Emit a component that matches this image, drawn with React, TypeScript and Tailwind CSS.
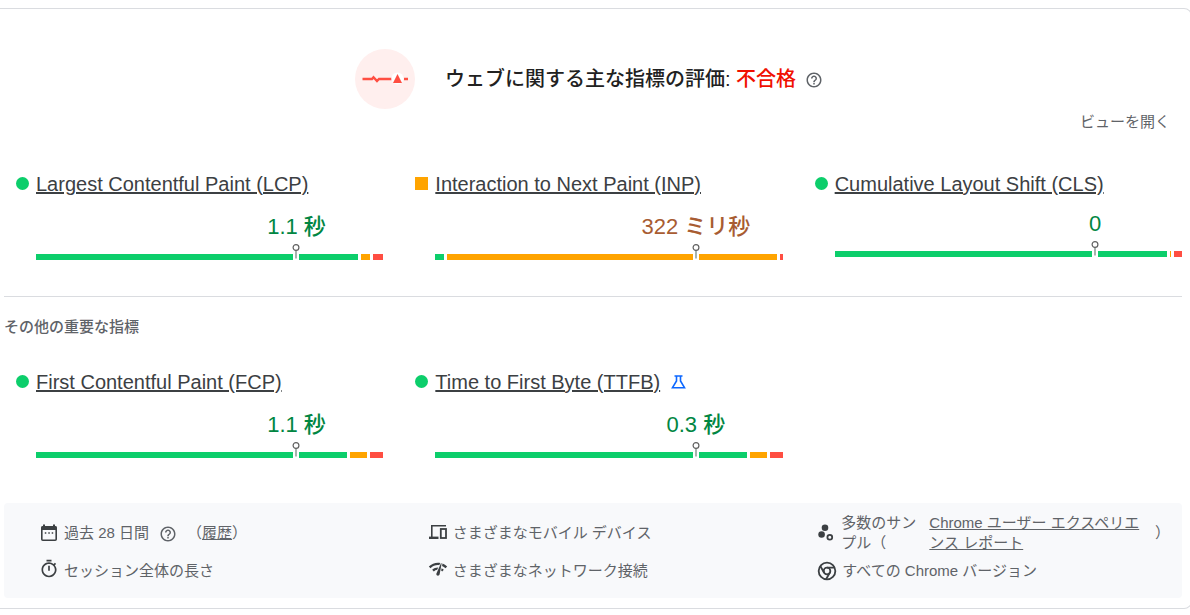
import { MdHelpOutline, MdNetworkCheck, MdOutlineTimer } from "react-icons/md";

type Rating = "good" | "average";

type Metric = {
  name: string;
  rating: Rating;
  value: string;
  // share of good / average / poor loads
  shares: [number, number, number];
  experimental?: boolean;
};

const CORE_METRICS: Metric[] = [
  { name: "Largest Contentful Paint (LCP)", rating: "good", value: "1.1 秒", shares: [322, 9, 10] },
  { name: "Interaction to Next Paint (INP)", rating: "average", value: "322 ミリ秒", shares: [9, 329, 3] },
  { name: "Cumulative Layout Shift (CLS)", rating: "good", value: "0", shares: [332, 1, 8] },
];

const OTHER_METRICS: Metric[] = [
  { name: "First Contentful Paint (FCP)", rating: "good", value: "1.1 秒", shares: [311, 17, 13] },
  {
    name: "Time to First Byte (TTFB)",
    rating: "good",
    value: "0.3 秒",
    shares: [311, 17, 13],
    experimental: true,
  },
];

const SHARE_COLORS = ["bg-[#0cce6b]", "bg-[#ffa400]", "bg-[#ff4e42]"];

function PulseIcon() {
  return (
    <svg width="60" height="60" viewBox="0 0 60 60" className="shrink-0" aria-hidden="true">
      <circle cx="30" cy="30" r="30" fill="#ffefee" />
      <path
        d="M7.5 30H17L18.5 28.3L22 32L24 30H36.5M49 30H53"
        fill="none"
        stroke="#ff4e42"
        strokeWidth="2.4"
      />
      <circle cx="42.5" cy="29.5" r="6" fill="#fff" />
      <path d="M42.5 25L47 34H38Z" fill="#ff4e42" />
    </svg>
  );
}

function FlaskIcon() {
  return (
    <svg
      width="15"
      height="14"
      viewBox="0 0 15 14"
      fill="none"
      stroke="#0c67ff"
      strokeWidth="1.6"
      className="ml-1"
      aria-hidden="true"
    >
      <path d="M3.5 1H11.5M5.5 1V6L1.5 12.7H13.5L9.5 6V1" />
    </svg>
  );
}

function CalendarIcon() {
  return (
    <svg width="18" height="18" viewBox="0 0 18 18" aria-hidden="true">
      <path d="M4 0.5V3M14 0.5V3" stroke="currentColor" strokeWidth="2" />
      <rect x="1.8" y="2.8" width="14.4" height="13.4" rx="1" fill="none" stroke="currentColor" strokeWidth="1.6" />
      <path d="M1.5 2.5H16.5V6H1.5Z" fill="currentColor" />
      <path d="M4.8 9H6.3M8.3 9H9.8M11.7 9H13.2" stroke="currentColor" strokeWidth="1.5" />
    </svg>
  );
}

function DevicesIcon() {
  return (
    <svg width="18" height="18" viewBox="0 0 18 18" fill="none" stroke="currentColor" strokeWidth="1.6" aria-hidden="true">
      <path d="M17 1.8H2.8V13" />
      <path d="M0 13.8H9.5" strokeWidth="2.4" />
      <rect x="11.8" y="5" width="5.2" height="9" strokeWidth="1.8" />
    </svg>
  );
}

function SamplesIcon() {
  return (
    <svg width="18" height="18" viewBox="0 0 18 18" fill="currentColor" aria-hidden="true">
      <circle cx="8" cy="3.8" r="3.3" />
      <circle cx="4.6" cy="10.5" r="3.3" />
      <circle cx="12.8" cy="13.2" r="2.4" fill="none" stroke="currentColor" strokeWidth="1.8" />
    </svg>
  );
}

function ChromeIcon() {
  return (
    <svg width="20" height="20" viewBox="0 0 24 24" fill="none" stroke="currentColor" strokeWidth="2.2" aria-hidden="true">
      <circle cx="12" cy="12" r="10" />
      <circle cx="12" cy="12" r="4" />
      <path d="M12 8H21.17M3.95 6.06L8.54 14M10.88 21.94L15.46 14" />
    </svg>
  );
}

function Pin() {
  return (
    <svg
      width="8"
      height="18"
      viewBox="0 0 8 18"
      className="absolute bottom-0 left-3/4 -translate-x-1/2"
      aria-hidden="true"
    >
      <path d="M1 11H7V18H1Z" fill="#fff" />
      <path d="M4 8V16.5" stroke="#8a9a92" strokeWidth="1.5" />
      <circle cx="4" cy="5.5" r="2.9" fill="#fff" stroke="#616161" strokeWidth="1.2" />
    </svg>
  );
}

function MetricCard({ metric }: { metric: Metric }) {
  const good = metric.rating === "good";
  const compact = metric.value === "0";

  return (
    <div>
      <div className="flex items-center gap-[7px] text-xl leading-7">
        <span className={`-mt-0.5 size-[13px] shrink-0 ${good ? "rounded-full bg-[#0cce6b]" : "bg-[#ffa400]"}`} />
        <a href="#" className="whitespace-nowrap text-[#3c4043] underline">
          {metric.name}
        </a>
        {metric.experimental && <FlaskIcon />}
      </div>
      <div className="pl-5">
        {/* value is centred over the pin at 75% */}
        <div className={`ml-[50%] text-center ${compact ? "mt-3" : "mt-[15px]"}`}>
          <span
            className={`whitespace-nowrap text-[22px] leading-7 font-medium ${good ? "text-[#018642]" : "text-[#a85c32]"}`}
          >
            {metric.value}
          </span>
        </div>
        <div className="relative mt-[13px] flex h-1.5 gap-[3px]">
          {metric.shares.map((share, i) => (
            <div key={i} className={SHARE_COLORS[i]} style={{ flex: `${share} 1 0px` }} />
          ))}
          <Pin />
        </div>
      </div>
    </div>
  );
}

export default function App() {
  return (
    <div className="overflow-hidden bg-white pt-2 font-['Liberation_Sans','Noto_Sans_CJK_JP',sans-serif] text-[15px] leading-5 text-[#5f6368]">
      <main className="-mr-0.5 rounded-r-lg border border-l-0 border-[#dadce0] pr-[9px] pb-[10px] pl-1">
        <header className="flex items-center justify-center pt-10 pr-2">
          <PulseIcon />
          <h2 className="ml-[30px] text-xl leading-7 font-medium text-[#212121]">
            ウェブに関する主な指標の評価: <span className="text-[#f01000]">不合格</span>
          </h2>
          <button type="button" aria-label="ヘルプ" className="ml-[9px] pt-0.5">
            <MdHelpOutline size={18} />
          </button>
        </header>

        <div className="flex justify-end pr-3">
          <button type="button" className="mt-[3px]">ビューを開く</button>
        </div>

        <section className="mt-[38px] grid grid-cols-3 gap-8 pl-3">
          {CORE_METRICS.map((metric) => (
            <MetricCard key={metric.name} metric={metric} />
          ))}
        </section>

        <hr className="mt-9 border-[#dadce0]" />

        <h3 className="mt-5 font-medium">その他の重要な指標</h3>

        <section className="mt-[31px] grid grid-cols-3 gap-8 pl-3">
          {OTHER_METRICS.map((metric) => (
            <MetricCard key={metric.name} metric={metric} />
          ))}
        </section>

        <footer className="mt-[45px] grid grid-cols-3 items-center gap-x-6 gap-y-2 rounded bg-[#f8f9fb] pt-[10px] pb-[17px] pl-9">
          <div className="flex items-center gap-[6px]">
            <span className="shrink-0 text-[#3c4043]">
              <CalendarIcon />
            </span>
            <span>過去 28 日間</span>
            <button type="button" aria-label="ヘルプ" className="mx-1 pt-0.5">
              <MdHelpOutline size={18} />
            </button>
            <span>
              （
              <a href="#" className="underline">
                履歴
              </a>
              ）
            </span>
          </div>
          <div className="flex items-center gap-[6px]">
            <span className="shrink-0 text-[#3c4043]">
              <DevicesIcon />
            </span>
            <span>さまざまなモバイル デバイス</span>
          </div>
          <div className="flex items-center gap-[6px] pr-3">
            <span className="shrink-0 text-[#3c4043]">
              <SamplesIcon />
            </span>
            <span className="w-[76px] shrink-0">多数のサンプル（</span>
            <a href="#" className="ml-[6px] flex-1 underline">
              Chrome ユーザー エクスペリエンス レポート
            </a>
            <span>）</span>
          </div>
          <div className="flex items-center gap-[6px]">
            <MdOutlineTimer size={20} className="-mx-px -mt-1 shrink-0 text-[#3c4043]" />
            <span>セッション全体の長さ</span>
          </div>
          <div className="flex items-center gap-[6px]">
            <MdNetworkCheck size={20} className="-mx-px -mt-1 shrink-0 text-[#3c4043]" />
            <span>さまざまなネットワーク接続</span>
          </div>
          <div className="flex items-center gap-[5px]">
            <span className="shrink-0 text-[#3c4043]">
              <ChromeIcon />
            </span>
            <span>すべての Chrome バージョン</span>
          </div>
        </footer>
      </main>
    </div>
  );
}
